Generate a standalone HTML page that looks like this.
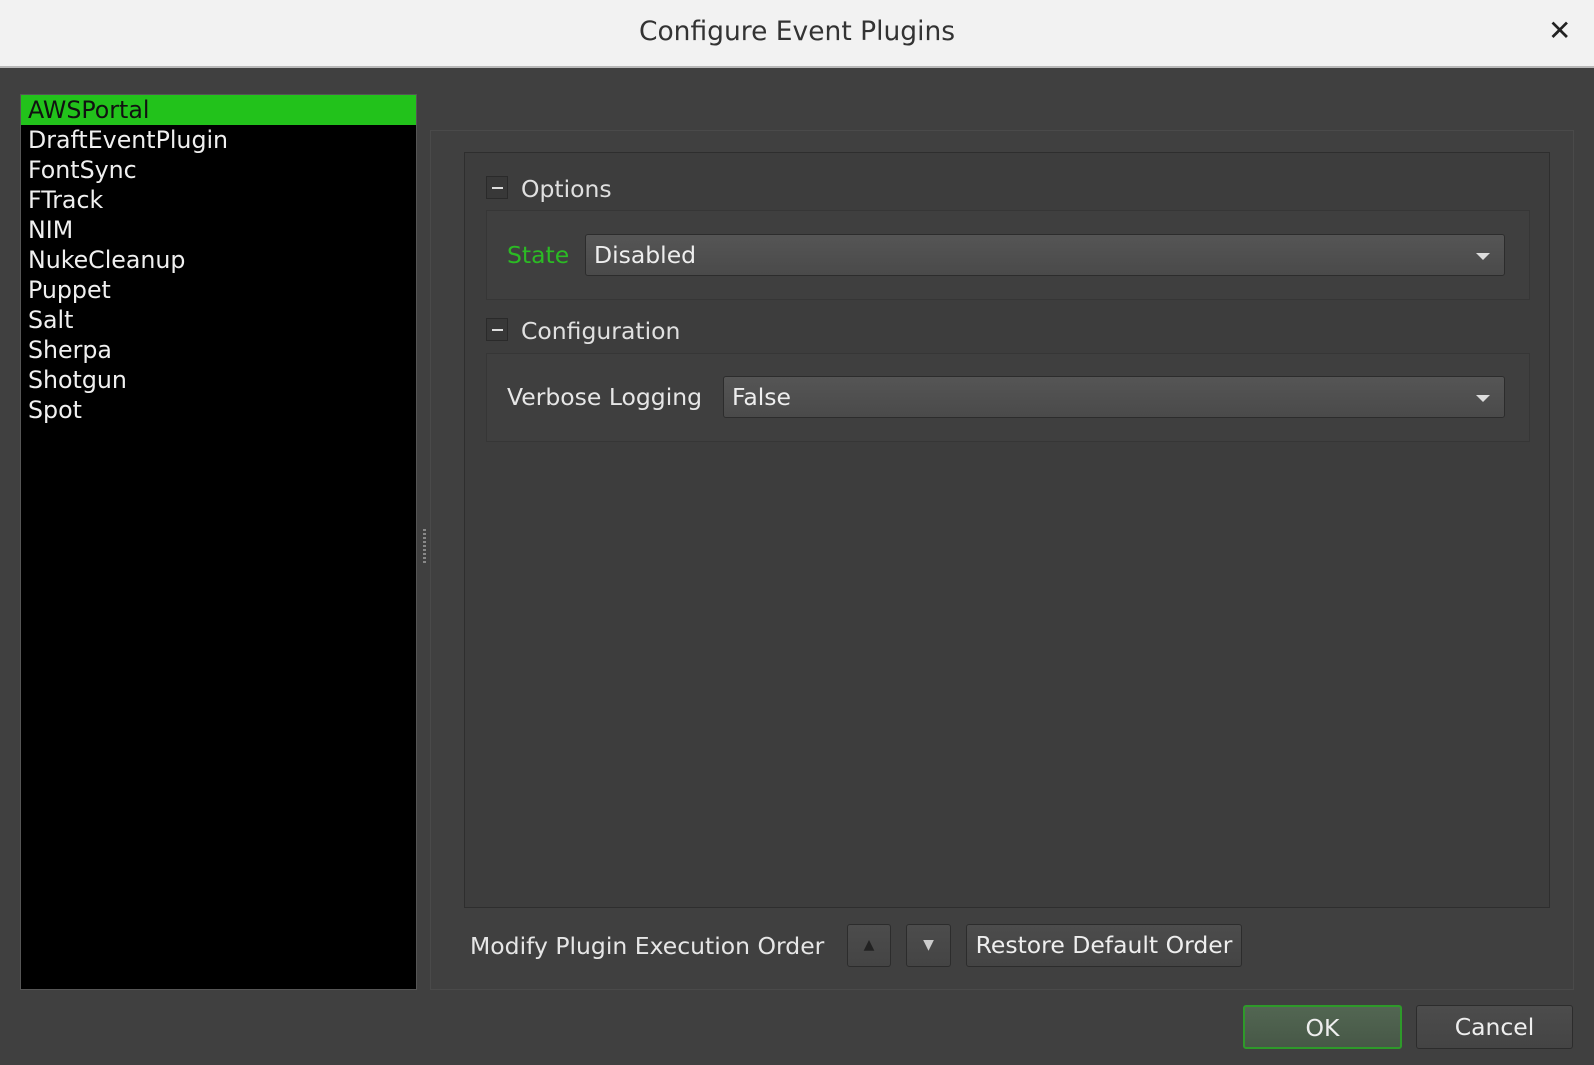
<!DOCTYPE html>
<html><head><style>
*{margin:0;padding:0;box-sizing:border-box}
body{width:1594px;height:1065px;background:#404040;font-family:"DejaVu Sans","Liberation Sans",sans-serif;color:#e6e6e6;position:relative;overflow:hidden}
.a{position:absolute}
.title{left:0;top:0;width:1594px;height:68px;background:#f2f2f2;border-bottom:2px solid #b8b8b8;color:#333;font-size:26.5px;text-align:center;line-height:64px}
.list{left:20px;top:94px;width:397px;height:896px;background:#000;border:1px solid #555}
.list div{height:30px;line-height:30px;padding-left:7px;font-size:23.7px;color:#f0f0f0}
.list .sel{background:#22c21b;color:#111}
.panel{left:430px;top:130px;width:1144px;height:860px;border:1px solid #4a4a4a;background:#404040}
.group{left:464px;top:152px;width:1086px;height:756px;border:1px solid #2e2e2e;background:#3d3d3d}
.minus{width:22px;height:23px;border:1px solid #2a2a2a;background:#383838}
.minus:after{content:"";position:absolute;left:5px;top:10px;width:11px;height:2px;background:#ddd}
.hdr{font-size:23.5px;color:#e0e0e0}
.frame{border:1px solid #363636;background:#3f3f3f}
.combo{height:42px;border:1px solid #2c2c2c;border-radius:3px;background:linear-gradient(#555,#4a4a4a);font-size:23.5px;line-height:40px;padding-left:8px;color:#eee}
.combo:after{content:"";position:absolute;right:14px;top:18px;border-left:7px solid transparent;border-right:7px solid transparent;border-top:7px solid #ddd}
.btn{border:1px solid #2c2c2c;border-radius:3px;background:linear-gradient(#4c4c4c,#444);font-size:23.5px;text-align:center;color:#eee}
</style></head><body>
<div class="a title">Configure Event Plugins</div>
<div class="a" style="left:1548px;top:14px;font-size:28px;color:#222;font-weight:bold">✕</div>
<div class="a list">
<div class="sel">AWSPortal</div><div>DraftEventPlugin</div><div>FontSync</div><div>FTrack</div><div>NIM</div><div>NukeCleanup</div><div>Puppet</div><div>Salt</div><div>Sherpa</div><div>Shotgun</div><div>Spot</div>
</div>
<div class="a" style="left:423px;top:529px;width:3px;height:34px;background:repeating-linear-gradient(#888 0 2px,transparent 2px 4px)"></div>
<div class="a panel"></div>
<div class="a group"></div>
<div class="a minus" style="left:486px;top:176px"></div>
<div class="a hdr" style="left:521px;top:175px">Options</div>
<div class="a frame" style="left:486px;top:210px;width:1044px;height:90px"></div>
<div class="a" style="left:507px;top:241px;font-size:23.5px;color:#2bbb24">State</div>
<div class="a combo" style="left:585px;top:234px;width:920px">Disabled</div>
<div class="a minus" style="left:486px;top:318px"></div>
<div class="a hdr" style="left:521px;top:317px">Configuration</div>
<div class="a frame" style="left:486px;top:353px;width:1044px;height:89px"></div>
<div class="a" style="left:507px;top:383px;font-size:23.5px">Verbose Logging</div>
<div class="a combo" style="left:723px;top:376px;width:782px">False</div>
<div class="a" style="left:470px;top:932px;font-size:23.5px">Modify Plugin Execution Order</div>
<div class="a btn" style="left:847px;top:924px;width:44px;height:43px;font-size:14px;line-height:41px;color:#222">▲</div>
<div class="a btn" style="left:906px;top:924px;width:45px;height:43px;font-size:14px;line-height:41px;color:#ccc">▼</div>
<div class="a btn" style="left:966px;top:924px;width:276px;height:43px;line-height:41px">Restore Default Order</div>
<div class="a btn" style="left:1243px;top:1005px;width:159px;height:44px;line-height:42px;border:2px solid #2e9a2a;background:linear-gradient(#526652,#475847)">OK</div>
<div class="a btn" style="left:1416px;top:1005px;width:157px;height:44px;line-height:42px">Cancel</div>
</body></html>
